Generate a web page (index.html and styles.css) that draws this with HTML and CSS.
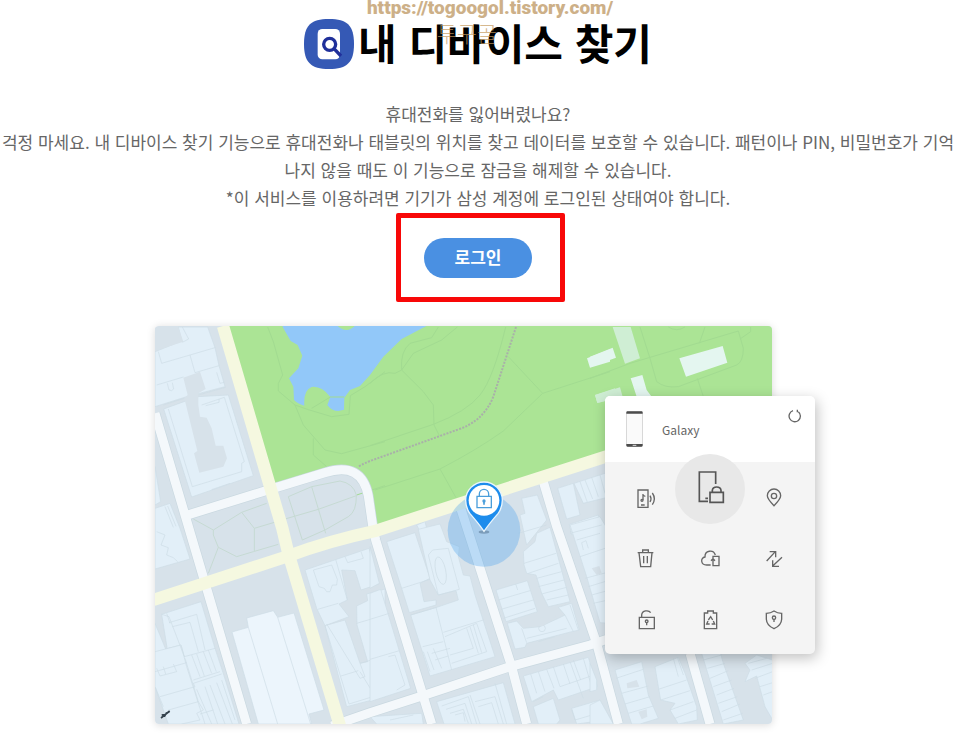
FILE: index.html
```
<!DOCTYPE html>
<html lang="ko">
<head>
  <meta charset="UTF-8">
  <meta name="viewport" content="width=device-width, initial-scale=1">
  <title>내 디바이스 찾기</title>
  <link rel="stylesheet" href="styles.css">
</head>
<body>

  <div class="watermark">
    <div class="watermark-url">https://togoogol.tistory.com/</div>
    <div class="watermark-name">투구골</div>
  </div>

  <main class="page">
    <header class="title">
      <svg class="app-icon" viewBox="0 0 150 150" aria-hidden="true">
        <path fill="#3559b5" d="M75 0C130 0 150 20 150 75S130 150 75 150S0 130 0 75S20 0 75 0Z"/>
        <rect x="41" y="30" width="67" height="91" rx="14" fill="#fff"/>
        <g fill="none" stroke="#20309a" stroke-width="10">
          <circle cx="77" cy="76" r="18"/>
          <path d="M90 89L111 111"/>
        </g>
      </svg>
      <h1>내 디바이스 찾기</h1>
    </header>

    <p class="intro">
      휴대전화를 잃어버렸나요?<br>
      걱정 마세요. 내 디바이스 찾기 기능으로 휴대전화나 태블릿의 위치를 찾고 데이터를 보호할 수 있습니다. 패턴이나 PIN, 비밀번호가 기억나지 않을 때도 이 기능으로 잠금을 해제할 수 있습니다.<br>
      *이 서비스를 이용하려면 기기가 삼성 계정에 로그인된 상태여야 합니다.
    </p>

    <div class="login-row">
      <div class="callout">
        <button type="button" class="login">로그인</button>
      </div>
    </div>

    <div class="preview">
      <svg class="map" viewBox="0 0 1851 1194" role="img" aria-label="지도">
        <rect width="1851" height="1194" fill="#d7e2ea"/>

        <!-- park -->
        <path fill="#abe495" d="M205 0H1851V240L660 620L640 470L560 420L360 480Z"/>

        <!-- top left -->
        <g transform="translate(-30 -33)">
          <path fill="#92c8f9" d="M413 36L437 78L458 90L472 122L460 160L432 190L445 215L447 255Q460 268 478 272Q475 225 500 216Q530 212 556 246L547 270Q560 288 580 288L597 284L598 248L615 225L645 213L675 180L715 125L770 72L850 30H632Q605 60 575 30H413Z"/>
          <g class="trail">
            <path d="M368 36L385 80L413 180L400 205V228L450 270L490 284L560 305L612 298L616 242L660 215L720 170"/>
            <path d="M450 270L475 330L540 405L590 416L720 380M505 370V420L545 455M500 280L556 246H598M635 540L720 512"/>
          </g>
          <g class="plaza">
            <path d="M145 612L205 645L290 592L365 565M290 592L328 640V708M328 640L395 620M205 645V660L220 697L275 725L325 710L400 688M220 697L190 775"/>
            <path d="M430 545L500 515L585 498Q625 505 634 540Q635 590 610 605L540 645L472 675ZM420 612L520 583L634 542M500 515L542 655"/>
          </g>
          <g class="building">
            <path d="M30 110L110 78L100 36H188L210 98L222 152L240 215L125 245L30 275Z"/>
            <path d="M56 282L158 245L250 240L325 482L140 546Z"/>
            <path d="M30 455L47 560L30 570ZM30 580L75 565L105 640L135 732L30 762Z"/>
          </g>
          <path class="gap" d="M30 36H100L115 80L30 108ZM115 188L165 170L182 222L160 235V270L165 305L185 308L200 340L212 392L235 392L246 430L235 455L163 473L147 415L157 408L118 250L128 240Z"/>
          <path class="line" d="M40 110L50 145L210 98M112 36L131 72L112 82M135 120L150 173M35 210L115 186M150 173L222 152M67 205L72 225Q80 230 86 222L82 203M160 240L242 217M215 172L225 205L238 202M55 270L118 250M70 282L142 515L290 470V445L298 440L238 247L170 270M182 272L222 262V252M200 524L255 505M60 575L85 637M68 573L93 634M35 650L60 660L48 690L70 698L65 720L85 728L98 740"/>
        </g>

        <!-- bottom left -->
        <g transform="translate(-30 582)">
          <g class="building">
            <path d="M30 310L62 387L108 375L118 410L68 395L50 283L168 245L210 385L238 470L282 612H90L30 500Z"/>
            <path d="M30 395L108 375L125 440L180 612H70L30 500Z"/>
            <path d="M480 150L672 85L702 192L648 210L630 152L590 150L607 240L582 252L600 275L612 290L540 317L515 265Z"/>
            <path d="M635 258L668 242L665 222L720 207V530L605 560L540 317L600 300L645 430L668 425L636 315Z"/>
          </g>
          <g class="building pale">
            <path d="M261 336L310 322L305 294L385 272L398 292L447 279L537 570L492 582L500 612H340Z"/>
          </g>
          <path class="line" d="M310 322L398 612M398 292L497 612M50 283L72 290L118 410L210 385M72 308L155 283L180 390M82 320L135 307L160 395M65 280L75 310M30 455L125 428M45 530L150 500L145 490L230 462M120 415L160 545M140 405L165 470M155 402L178 468M175 395L200 460M190 390L214 455M35 445L45 468L95 455L85 432M55 440L62 462M145 480L225 455M155 508L200 612M180 500L218 612M195 495L240 612M215 488L262 612M230 480L270 600M70 570L160 545L175 570L155 580L165 600L110 612M165 582L205 570M30 500L55 560"/>
          <path class="line" d="M505 150L560 135L577 178L575 195L562 195L555 215H545L538 205L522 200ZM572 118L607 240M600 110L608 128L655 115L648 95M518 268L580 250M545 312L645 475L660 470L645 430L720 408M540 317L612 552L690 528L645 455M635 310L720 285M588 468L640 452M690 528L720 520"/>
          <path d="M48 594L74 573M50 585L62 583L58 590M62 580L73 576" fill="none" stroke="#34414c" stroke-width="5"/>
        </g>

        <!-- top middle -->
        <g transform="translate(645 -33)">
          <g class="trail">
            <path d="M0 205Q40 165 75 175L95 165L130 115L215 75L262 36M95 165Q90 110 120 85L185 68L205 36"/>
            <path d="M95 165L160 230L190 270L192 330L208 362M0 392L190 328Q290 290 330 240Q370 190 407 36"/>
            <path d="M415 125L518 235L720 170M518 235L400 348Q320 405 210 462L15 525M210 462L258 548"/>
          </g>
          <path d="M438 36L370 245Q340 320 260 345L0 438Q-30 450 -35 456" fill="none" stroke="#a9b0a9" stroke-width="6" stroke-dasharray="6 4"/>
          <g class="hall">
            <path d="M651 130L720 103V140L660 158Z"/>
            <path class="dim" d="M675 240L735 220V250L682 264Z"/>
          </g>
          <g class="building">
            <path d="M455 550L502 540L530 615L470 690L450 600L465 595Z"/>
            <path d="M563 520L610 505L630 600L590 612ZM612 505L720 470V545L640 565ZM598 628L685 600L695 635L605 660Z"/>
            <path d="M140 630L165 620L170 640L148 645Z"/>
          </g>
          <path class="line" d="M630 500L652 562M645 495L668 552M665 487L685 545M690 480L705 535M600 650L690 622M445 655L530 630"/>
        </g>

        <!-- bottom middle -->
        <g transform="translate(645 582)">
          <g class="building">
            <path d="M0 80L28 190L0 205ZM0 220L32 208L122 505L0 545Z"/>
            <path d="M50 65L135 38L180 175L150 190L162 245L198 240V255L118 278L95 205Z"/>
            <path d="M145 28L210 12L230 65L268 80L265 110L280 165L300 168L315 225L375 410L180 468L122 285L200 262L265 240L258 212L205 225L180 180Z"/>
            <path d="M460 95L495 65L500 40L540 22L600 245L535 260L515 220L498 165L470 160L462 135Z"/>
            <path d="M378 210L472 182L502 275L408 305Z"/>
            <path d="M412 310L440 303L460 325L510 320L565 295L585 285L565 262L605 250L628 330L605 335L470 370L465 382L435 387Z"/>
            <path d="M600 15L690 -10L720 40V310L690 308L650 170Z"/>
            <path d="M200 545L400 488L435 612H222ZM0 590L155 580L160 612H20Z"/>
            <path d="M460 468L655 412L682 500L565 540L550 510L485 545ZM490 560L550 535L570 600L560 612H505ZM605 565L690 540L710 600L620 612Z"/>
          </g>
          <path class="line" d="M95 205L180 178M175 105L188 90L235 85L268 208L205 225ZM198 262L245 450M122 285L200 262M220 337L340 300M225 350L320 310L350 395L245 430M300 320L325 400M310 315L335 398M240 405L310 385L290 325M158 380L220 365M160 395L180 455M172 395L192 450M190 385L215 445M185 400L240 385M195 420L235 408"/>
          <ellipse class="line" cx="212" cy="152" rx="15" ry="42" transform="rotate(-12 212 152)"/>
          <path class="line" d="M462 130L558 100M475 160L565 130M500 175L575 155M505 200L582 180M515 222L590 202M530 240L595 225M385 240L480 212M393 268L490 240M437 192L443 210M400 295L495 265M455 325L470 368M470 355L590 325M585 285L610 335M600 255L625 330M505 365L555 350M0 298L58 280M0 418L88 392M55 410L75 405L105 495L80 510M600 40L695 15M620 60L690 40M630 110L720 80M640 90L635 68L648 62L655 85M645 175L720 155M655 200L720 180M665 225L720 210M670 250L715 240"/>
          <circle class="line" cx="516" cy="325" r="10"/>
          <path class="line" d="M215 558L295 530L320 612M228 568L285 550L305 612M240 580L280 568L295 610M255 585L280 578L285 605M300 525L330 612M315 545L375 530L400 612M325 560L365 548L385 612M375 490L410 612M482 462L500 520M505 455L525 515M530 448L552 505M550 440L570 500L672 465M580 432L600 492M600 425L640 535M610 420L632 480M640 415L665 500M490 545L520 530M605 570L615 600L700 575M60 600L130 585"/>
          <path class="gap" d="M665 145L688 138L695 160L680 165ZM445 300L475 310L520 290L545 300L560 285L520 318L460 322Z"/>
        </g>

        <!-- top right -->
        <g transform="translate(1305 -33)">
          <g class="trail">
            <path d="M0 190L120 145L445 48L460 100Q460 140 440 150L265 215Q225 220 200 200L180 130L150 36M345 36L328 85M322 190L340 245M235 36Q260 52 285 36M482 36V50L450 72"/>
          </g>
          <g class="hall">
            <path d="M0 125L68 98L78 128L0 157ZM268 130L398 93L412 143L288 185ZM122 190L157 180L170 225L185 245H140Z"/>
            <path class="dim" d="M68 36H122L150 130L105 146ZM15 240L90 217L98 245L22 264Z"/>
          </g>
        </g>

        <!-- bottom right -->
        <g transform="translate(1305 582)">
          <g class="building">
            <path d="M0 555L30 540L70 612H0ZM0 430L20 480V510L0 515Z"/>
            <path d="M75 450L155 425L175 525L205 595L150 612H125L95 520Z"/>
            <path d="M195 440L265 412L285 460L320 560L322 600L265 612L240 570L255 550L212 540L205 500Z"/>
            <path d="M335 400L390 395L400 430L460 600L400 612Z"/>
            <path d="M465 430L500 405L548 420V600L525 560L500 468L465 485L480 450Z"/>
          </g>
          <path class="line" d="M78 475L160 448M95 520L175 498M105 552L180 530M115 580L190 558M205 508L290 480M212 540L300 512M240 570L310 545M255 595L320 570M340 420L395 405M352 445L405 430M360 475L415 452M370 500L425 480M380 525L432 505M385 550L442 530M395 575L450 552M400 600L458 580M475 430L530 415M485 450L548 430M495 475L548 455M510 500L548 488M520 525L548 515M250 415L265 470M262 412L280 465"/>
          <path class="gap" d="M110 490L140 480L148 500L112 505ZM145 575L170 568L172 590L155 598Z"/>
        </g>

        <!-- roads -->
        <g class="road-edge">
          <path d="M0 262L90 567L275 1194"/>
          <path d="M98 567L355 487L510 440Q620 405 640 510L653 600L662 642L830 1194"/>
          <path d="M530 1200L645 1160L810 1107L1065 1022L1305 957L1365 937"/>
          <path d="M1165 467L1205 602L1325 952L1390 1194"/>
          <path d="M915 540L1070 1022L1115 1194"/>
          <path d="M1605 982L1665 1194"/>
        </g>
        <g class="road">
          <path d="M0 262L90 567L275 1194"/>
          <path d="M98 567L355 487L510 440Q620 405 640 510L653 600L662 642L830 1194"/>
          <path d="M530 1200L645 1160L810 1107L1065 1022L1305 957L1365 937"/>
          <path d="M1165 467L1205 602L1325 952L1390 1194"/>
          <path d="M915 540L1070 1022L1115 1194"/>
          <path d="M1605 982L1665 1194"/>
        </g>
        <g class="road main-road">
          <path d="M-5 822L400 690Q520 645 660 615L1345 394L1851 233"/>
          <path d="M204 0L382 607L400 682L555 1200"/>
        </g>

        <!-- current position -->
        <circle cx="987" cy="613" r="109" fill="#4aa0ee" fill-opacity=".33"/>
        <ellipse cx="987" cy="618" rx="16" ry="5" fill="#7b9cba"/>
        <path fill="#1d8cec" stroke="#e9f5fd" stroke-width="4" d="M987 616Q972 594 945 563Q932 545 932 523A55 55 0 0 1 1042 523Q1042 545 1029 563Q1002 594 987 616Z"/>
        <circle cx="987" cy="523" r="46" fill="#fff"/>
        <g fill="none" stroke="#4a9edb" stroke-width="4">
          <path d="M966 511H1009V545H966ZM973 511V504A14 14 0 0 1 1001 504V511"/>
          <path d="M987 523V536" stroke-width="5"/>
          <circle cx="987" cy="525" r="3"/>
        </g>
      </svg>

      <section class="panel">
        <div class="panel-head">
          <svg class="phone" viewBox="0 0 51 108" aria-hidden="true">
            <rect x="1" y="1" width="49" height="106" rx="5" fill="#fafafa" stroke="#bbb" stroke-width="2"/>
            <path d="M1 8V5Q1 1 5 1H46Q50 1 50 5V8ZM1 99H50V103Q50 107 46 107H5Q1 107 1 103Z" fill="#4c4c4c"/>
            <path d="M20 103H31" stroke="#ddd" stroke-width="3"/>
          </svg>
          <span class="device-name">Galaxy</span>
          <button type="button" class="refresh" aria-label="새로고침">
            <svg viewBox="0 0 42 42">
              <path d="M15 5A17 17 0 1 0 31 8M28 2V10"/>
            </svg>
          </button>
        </div>
        <div class="actions">
          <button type="button" aria-label="벨 울리기">
            <svg viewBox="0 0 72 72">
              <path d="M12 12H42V64H12ZM21 57H32"/>
              <path d="M27 42V24Q28 30 34 31"/>
              <circle cx="24" cy="43" r="3"/>
              <path d="M48 29Q54 38 48 48M55 21Q67 38 55 56"/>
            </svg>
          </button>
          <button type="button" class="selected" aria-label="잠금">
            <svg viewBox="0 0 108 108">
              <path d="M71 39V3H22V91H48M40 82H48"/>
              <path d="M54 64H94V94H54ZM61 64V58Q62 48 74 48T87 58V64"/>
            </svg>
          </button>
          <button type="button" aria-label="위치 추적">
            <svg viewBox="0 0 72 72">
              <path d="M36 59Q16 38 16 29A20 20 0 0 1 56 29Q56 38 36 59Z"/>
              <circle cx="36" cy="30" r="8"/>
            </svg>
          </button>
          <button type="button" aria-label="데이터 삭제">
            <svg viewBox="0 0 72 72">
              <path d="M11 17H58M26 17V9H43V17M15 17L20 59H50L54 17M29 27V49M40 27V49"/>
            </svg>
          </button>
          <button type="button" aria-label="백업">
            <svg viewBox="0 0 72 72">
              <path d="M38 54H26C8 54 6 32 21 30C20 10 46 6 52 24"/>
              <path d="M45 34V28H63V56H45V48M45 48V37M39 41L45 35L51 41"/>
            </svg>
          </button>
          <button type="button" aria-label="통화/메시지 가져오기">
            <svg viewBox="0 0 72 72">
              <path d="M14 42L40 14M23 14H41V31M60 31L32 57M32 40V58H51"/>
            </svg>
          </button>
          <button type="button" aria-label="잠금해제">
            <svg viewBox="0 0 72 72">
              <path d="M16 28H61V62H16ZM23 28V21C24 7 44 5 50 14M38 42V52"/>
              <circle cx="38" cy="40" r="4"/>
            </svg>
          </button>
          <button type="button" aria-label="배터리 시간 연장">
            <svg viewBox="0 0 72 72">
              <path d="M19 15H29V9H46V15H56V62H19Z"/>
              <path d="M31 36L38 26L44 36M46 39L50 48H41M35 48H26L30 39"/>
            </svg>
          </button>
          <button type="button" aria-label="보안">
            <svg viewBox="0 0 72 72">
              <path d="M36 9Q46 16 59 16V34Q58 53 36 62Q14 53 13 34V16Q26 16 36 9ZM36 33V42"/>
              <circle cx="36" cy="29" r="5"/>
            </svg>
          </button>
        </div>
      </section>
    </div>
  </main>

</body>
</html>
```

FILE: styles.css
```
* {
  box-sizing: border-box;
}
body {
  margin: 0;
  background: #fff;
  color: #666;
  font-family: "Noto Sans CJK KR", sans-serif;
}
button {
  border: 0;
  padding: 0;
  font-family: inherit;
  cursor: pointer;
}
.page {
  padding: 19px 12px 24px 0;
}
.title {
  display: flex;
  justify-content: center;
  align-items: center;
  gap: 4px;
  height: 50px;
}
.app-icon {
  width: 50px;
  height: 50px;
}
h1 {
  margin: 0;
  color: #000;
  font-size: 42px;
  font-weight: 700;
  line-height: 46px;
  padding-bottom: 4px;
}
.intro {
  margin: 31px 0 0;
  font-size: 17px;
  line-height: 28px;
  text-align: center;
}

/* login button with the red marker around it */
.login-row {
  display: flex;
  justify-content: center;
}
.callout {
  margin: 1px 0 0 5px;
  padding: 20px 28px 19px 23px;
  border: 5px solid #f80808;
  border-radius: 2px;
}
.login {
  display: block;
  width: 108px;
  height: 40px;
  padding-bottom: 4px;
  border-radius: 20px;
  background: #4a90e2;
  color: #fff;
  font-size: 17px;
  font-weight: 700;
}

/* map with the device panel on top */
.preview {
  position: relative;
  max-width: 674px;
  margin: 24px auto 0;
  padding: 0 43px 0 14px;
}
.map {
  display: block;
  width: 100%;
  border-radius: 4px;
  box-shadow: 0 1px 8px rgba(0, 0, 0, 0.15);
}
.building path {
  fill: #e2eff8;
  stroke: #cddce5;
  stroke-width: 2;
}
.pale path {
  fill: #ecf5fc;
}
.gap {
  fill: #d7e2ea;
}
.line {
  fill: none;
  stroke: #cddce5;
  stroke-width: 2;
}
.trail {
  fill: none;
  stroke: #a2db91;
  stroke-width: 3;
}
.plaza {
  fill: none;
  stroke: #c6dad3;
  stroke-width: 3;
}
.hall {
  fill: #e4f6f0;
}
.hall .dim {
  fill: #cfeed4;
}
.road-edge {
  fill: none;
  stroke: #c9d8e0;
  stroke-width: 31;
}
.road {
  fill: none;
  stroke: #f4f8fb;
  stroke-width: 27;
}
.main-road {
  stroke: #f5f8e0;
  stroke-width: 37;
}
.panel {
  position: absolute;
  top: 70px;
  right: 0;
  width: 210px;
  border-radius: 5px;
  background: #f4f4f4;
  box-shadow: 2px 4px 14px rgba(0, 0, 0, 0.25);
}
.panel-head {
  display: flex;
  align-items: center;
  height: 66px;
  padding: 0 13px 0 21px;
  border-radius: 5px 5px 0 0;
  background: #fff;
}
.phone {
  width: 17px;
  height: 36px;
  margin-right: 19px;
}
.device-name {
  flex: 1;
  font-size: 12px;
}
.refresh {
  align-self: flex-start;
  width: 14px;
  height: 14px;
  margin-top: 13px;
  background: none;
}
.panel button svg {
  display: block;
  width: 24px;
  height: 24px;
  fill: none;
  stroke: #666;
  stroke-width: 4;
}
.panel .refresh svg {
  width: 14px;
  height: 14px;
}
.actions {
  display: grid;
  grid-template-columns: repeat(3, 1fr);
  grid-auto-rows: 61px;
  padding: 5px 9px 4px;
}
.actions button {
  display: flex;
  justify-content: center;
  align-items: center;
  background: none;
}
.actions .selected {
  align-self: start;
  justify-self: center;
  width: 70px;
  height: 70px;
  margin: -13px -3px 0;
  border-radius: 50%;
  background: #e8e8e8;
}
.actions .selected svg {
  width: 36px;
  height: 36px;
  stroke: #555;
  stroke-width: 5;
}

.watermark {
  position: absolute;
  top: -6px;
  left: 0;
  right: 0;
  text-align: center;
  pointer-events: none;
}
.watermark-url {
  padding-left: 12px;
  color: #cdb088;
  font-family: Roboto, sans-serif;
  font-size: 19px;
  font-weight: 900;
  line-height: 28px;
}
.watermark-name {
  padding-right: 34px;
  color: rgba(196, 152, 92, 0.7);
  font-size: 22px;
  font-weight: 300;
  line-height: 20px;
}
```
